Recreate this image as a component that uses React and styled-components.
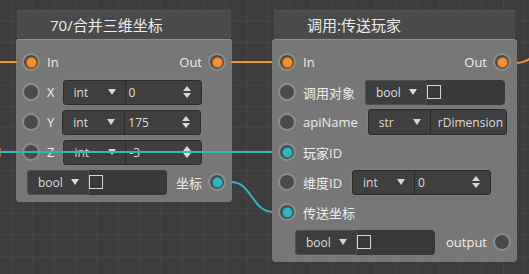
import React from "react";
import styled, { createGlobalStyle } from "styled-components";

const GlobalStyle = createGlobalStyle`
  html, body { margin: 0; padding: 0; width: 529px; height: 274px; overflow: hidden; background: #3c3c3c; }
  body { font-family: "Open Sans", "Noto Sans CJK SC", sans-serif; }
  * { box-sizing: border-box; }
`;

const ORANGE = "#f1933b";
const TEAL = "#36b4c4";

const Canvas = styled.div`
  position: relative;
  width: 529px;
  height: 274px;
  overflow: hidden;
  background-color: #3c3c3c;
  background-image: linear-gradient(to right, #464646 1px, transparent 1px),
    linear-gradient(to bottom, #464646 1px, transparent 1px);
  background-size: 21.4px 21.4px;
  background-position: 11px -1px;
`;

const Node = styled.div`
  position: absolute;
  left: ${(p) => p.$x}px;
  top: ${(p) => p.$y}px;
  width: ${(p) => p.$w}px;
  z-index: ${(p) => p.$z};
`;

const Header = styled.div`
  margin: 0 ${(p) => p.$inset}px;
  height: 30px;
  padding-left: 33px;
  background: #4a4a4a;
  border-top: 1px solid #555;
  border-bottom: 1px solid #8c8c8c;
  color: #ececec;
  font-size: 15px;
  line-height: 28px;
  white-space: nowrap;
`;

const Body = styled.div`
  background: #777777;
  border-radius: 0 0 4px 4px;
  padding: 7px 0 5px;
  display: flex;
  flex-direction: column;
`;

const Row = styled.div`
  height: 30px;
  display: flex;
  align-items: center;
  padding: 0 6px;
`;

const Spacer = styled.div`
  flex: 1;
`;

const PinRing = styled.div`
  width: 18px;
  height: 18px;
  flex: none;
  border-radius: 50%;
  border: 2px solid #8d8d8d;
  background: #4a4a4a;
  display: flex;
  align-items: center;
  justify-content: center;
`;

const PinDot = styled.div`
  width: 9px;
  height: 9px;
  border-radius: 50%;
  background: ${(p) => p.$color};
  box-shadow: 0 0 0 1px ${(p) => p.$rim};
`;

const Pin = ({ color }) => (
  <PinRing>
    {color === "orange" && <PinDot $color={ORANGE} $rim="#b56420" />}
    {color === "teal" && <PinDot $color={TEAL} $rim="#1f7f8c" />}
  </PinRing>
);

const Label = styled.span`
  color: #ededed;
  font-size: 13px;
  white-space: nowrap;
  margin: ${(p) => (p.$right ? "0 6px 0 0" : "0 0 0 7px")};
`;

const Field = styled.div`
  margin-left: ${(p) => p.$ml}px;
  width: 139px;
  height: ${(p) => p.$h || 25}px;
  display: flex;
  background: #3c3c3c;
  border: 1px solid #2b2b2b;
  border-radius: 3px;
  box-shadow: 0 0 0 1px rgba(255, 255, 255, 0.04);
  overflow: hidden;
  font-size: 12px;
  color: #dedede;
`;

const Select = styled.div`
  width: 62px;
  flex: none;
  display: flex;
  align-items: center;
  justify-content: space-between;
  padding: 0 9px 0 10px;
  border-right: 1px solid #2b2b2b;
  background: #3f3f3f;
`;

const Arrow = styled.span`
  width: 0;
  height: 0;
  border-left: 4px solid transparent;
  border-right: 4px solid transparent;
  border-top: 6px solid #d8d8d8;
`;

const Value = styled.div`
  flex: 1;
  display: flex;
  align-items: center;
  justify-content: space-between;
  padding: 0 10px 0 ${(p) => p.$pl || 3}px;
  background: #3f3f3f;
  white-space: nowrap;
  overflow: hidden;
`;

const SpinnerBox = styled.span`
  display: flex;
  flex-direction: column;
  gap: 2px;
`;

const Tri = styled.span`
  width: 0;
  height: 0;
  border-left: 4px solid transparent;
  border-right: 4px solid transparent;
  ${(p) =>
    p.$up ? "border-bottom: 5px solid #d8d8d8;" : "border-top: 5px solid #d8d8d8;"}
`;

const Spinner = () => (
  <SpinnerBox>
    <Tri $up />
    <Tri />
  </SpinnerBox>
);

const BoolBox = styled.div`
  margin-left: ${(p) => p.$ml}px;
  width: 140px;
  height: 25px;
  display: flex;
  align-items: center;
  background: #393939;
  border-radius: 4px;
  font-size: 12px;
  color: #dedede;
`;

const BoolSelect = styled.div`
  width: 62px;
  height: 100%;
  display: flex;
  align-items: center;
  justify-content: space-between;
  padding: 0 9px 0 10px;
  border: 1px solid #4f4f4f;
  border-radius: 4px 0 0 4px;
  background: #3d3d3d;
`;

const Check = styled.span`
  width: 14px;
  height: 14px;
  margin-left: 0px;
  border: 1px solid #d6d6d6;
`;

const NumField = ({ ml, value }) => (
  <Field $ml={ml}>
    <Select>
      int <Arrow />
    </Select>
    <Value>
      {value}
      <Spinner />
    </Value>
  </Field>
);

const BoolField = ({ ml }) => (
  <BoolBox $ml={ml}>
    <BoolSelect>
      bool <Arrow />
    </BoolSelect>
    <Check />
  </BoolBox>
);

const Wires = styled.svg`
  position: absolute;
  left: 0;
  top: 0;
  z-index: 2;
  pointer-events: none;
`;

const EdgeText = styled.span`
  position: absolute;
  left: -4px;
  top: 144px;
  font-size: 12px;
  color: #dddddd;
  z-index: 2;
`;

export default function App() {
  return (
    <>
      <GlobalStyle />
      <Canvas>
        <EdgeText>1</EdgeText>
        <Node $x={16} $y={10} $w={216} $z={1}>
          <Header $inset={1}>70/合并三维坐标</Header>
          <Body>
            <Row>
              <Pin color="orange" />
              <Label>In</Label>
              <Spacer />
              <Label $right>Out</Label>
              <Pin color="orange" />
            </Row>
            <Row>
              <Pin />
              <Label>X</Label>
              <NumField ml={8} value="0" />
            </Row>
            <Row>
              <Pin />
              <Label>Y</Label>
              <NumField ml={8} value="175" />
            </Row>
            <Row>
              <Pin />
              <Label>Z</Label>
              <NumField ml={9} value="-3" />
            </Row>
            <Row>
              <BoolField ml={5} />
              <Spacer />
              <Label $right>坐标</Label>
              <Pin color="teal" />
            </Row>
          </Body>
        </Node>

        <Wires width="529" height="274" viewBox="0 0 529 274">
          <g fill="none" strokeWidth="2">
            <path d="M0 62 H17" stroke={ORANGE} />
            <path d="M231 62 H273" stroke={ORANGE} />
            <path d="M516 63 C523 63 526 61 533 57" stroke={ORANGE} />
            <path d="M0 152 H273" stroke={TEAL} />
            <path d="M231 182 C252 182 252 212 273 212" stroke={TEAL} />
          </g>
        </Wires>

        <Node $x={272} $y={10} $w={245} $z={3}>
          <Header $inset={2}>调用:传送玩家</Header>
          <Body>
            <Row>
              <Pin color="orange" />
              <Label>In</Label>
              <Spacer />
              <Label $right>Out</Label>
              <Pin color="orange" />
            </Row>
            <Row>
              <Pin />
              <Label>调用对象</Label>
              <BoolField ml={10} />
            </Row>
            <Row>
              <Pin />
              <Label>apiName</Label>
              <Field $ml={10} $h={26}>
                <Select>
                  str <Arrow />
                </Select>
                <Value $pl={7}>rDimension</Value>
              </Field>
            </Row>
            <Row>
              <Pin color="teal" />
              <Label>玩家ID</Label>
            </Row>
            <Row>
              <Pin />
              <Label>维度ID</Label>
              <NumField ml={10} value="0" />
            </Row>
            <Row>
              <Pin color="teal" />
              <Label>传送坐标</Label>
            </Row>
            <Row>
              <BoolField ml={17} />
              <Spacer />
              <Label $right>output</Label>
              <Pin />
            </Row>
          </Body>
        </Node>
      </Canvas>
    </>
  );
}
